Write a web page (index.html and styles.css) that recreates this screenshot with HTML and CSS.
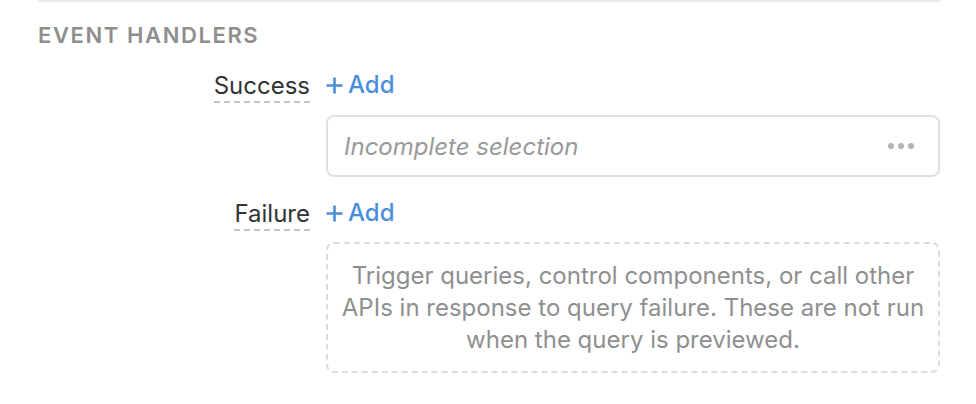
FILE: index.html
```html
<!DOCTYPE html>
<html>
<head>
<meta charset="utf-8">
<link rel="stylesheet" href="styles.css">
</head>
<body>
<div class="panel">
  <div class="section">
    <div class="heading">EVENT HANDLERS</div>
    <div class="grid">
      <div class="label-cell"><span class="label">Success</span></div>
      <div class="add-cell"><svg class="plus" viewBox="0 0 17 17"><path d="M8.5 0.5v16M0.5 8.5h16"/></svg><span class="add">Add</span></div>
      <div></div>
      <div class="select">
        <span class="placeholder">Incomplete selection</span>
        <span class="dots"><i></i><i></i><i></i></span>
      </div>
      <div class="label-cell"><span class="label">Failure</span></div>
      <div class="add-cell"><svg class="plus" viewBox="0 0 17 17"><path d="M8.5 0.5v16M0.5 8.5h16"/></svg><span class="add">Add</span></div>
      <div></div>
      <div class="empty">Trigger queries, control components, or call other APIs in response to query failure. These are not run when the query is previewed.</div>
    </div>
  </div>
</div>
</body>
</html>
```

FILE: styles.css
```css
html, body {
  margin: 0;
  padding: 0;
  background: #fff;
}
body {
  font-family: Inter, "Noto Sans", sans-serif;
  color: #333;
}
.panel {
  width: 976px;
  height: 404px;
  padding: 0 36px 0 38px;
  box-sizing: border-box;
}
.section {
  border-top: 2px solid #ebebeb;
}
.heading {
  margin-top: 20px;
  font-size: 22px;
  font-weight: 600;
  letter-spacing: 1.6px;
  color: #8e8e8e;
  line-height: 26px;
}
.grid {
  display: grid;
  grid-template-columns: 272px 1fr;
  column-gap: 16px;
  margin-top: 17px;
}
.label-cell {
  display: flex;
  justify-content: flex-end;
  align-items: center;
  height: 40px;
}
.label {
  font-size: 24px;
  line-height: 30px;
  color: #333;
  border-bottom: 2px dashed #c4c4c4;
  padding-top: 4px;
}
.add-cell {
  display: flex;
  align-items: center;
  gap: 5px;
  height: 40px;
}
.plus {
  width: 17px;
  height: 17px;
  margin-top: 1px;
  stroke: #4a8fdb;
  stroke-width: 2.6;
  fill: none;
}
.add {
  font-size: 24px;
  font-weight: 500;
  color: #4a8fdb;
  line-height: 30px;
}
.select {
  height: 62px;
  box-sizing: border-box;
  border: 2px solid #e0e0e0;
  border-radius: 8px;
  display: flex;
  align-items: center;
  justify-content: space-between;
  padding: 0 24px 0 16px;
  margin-top: 10px;
  margin-bottom: 16px;
}
.placeholder {
  font-size: 24px;
  font-style: italic;
  color: #999;
}
.dots {
  display: flex;
  gap: 4px;
}
.dots i {
  width: 6px;
  height: 6px;
  border-radius: 50%;
  background: #b3b3b3;
}
.empty {
  margin-top: 9px;
  height: 131px;
  box-sizing: border-box;
  border: 2px dashed #dcdcdc;
  border-radius: 8px;
  display: flex;
  align-items: center;
  justify-content: center;
  text-align: center;
  padding: 0 8px;
  font-size: 24px;
  line-height: 32px;
  color: #8f8f8f;
}
```
